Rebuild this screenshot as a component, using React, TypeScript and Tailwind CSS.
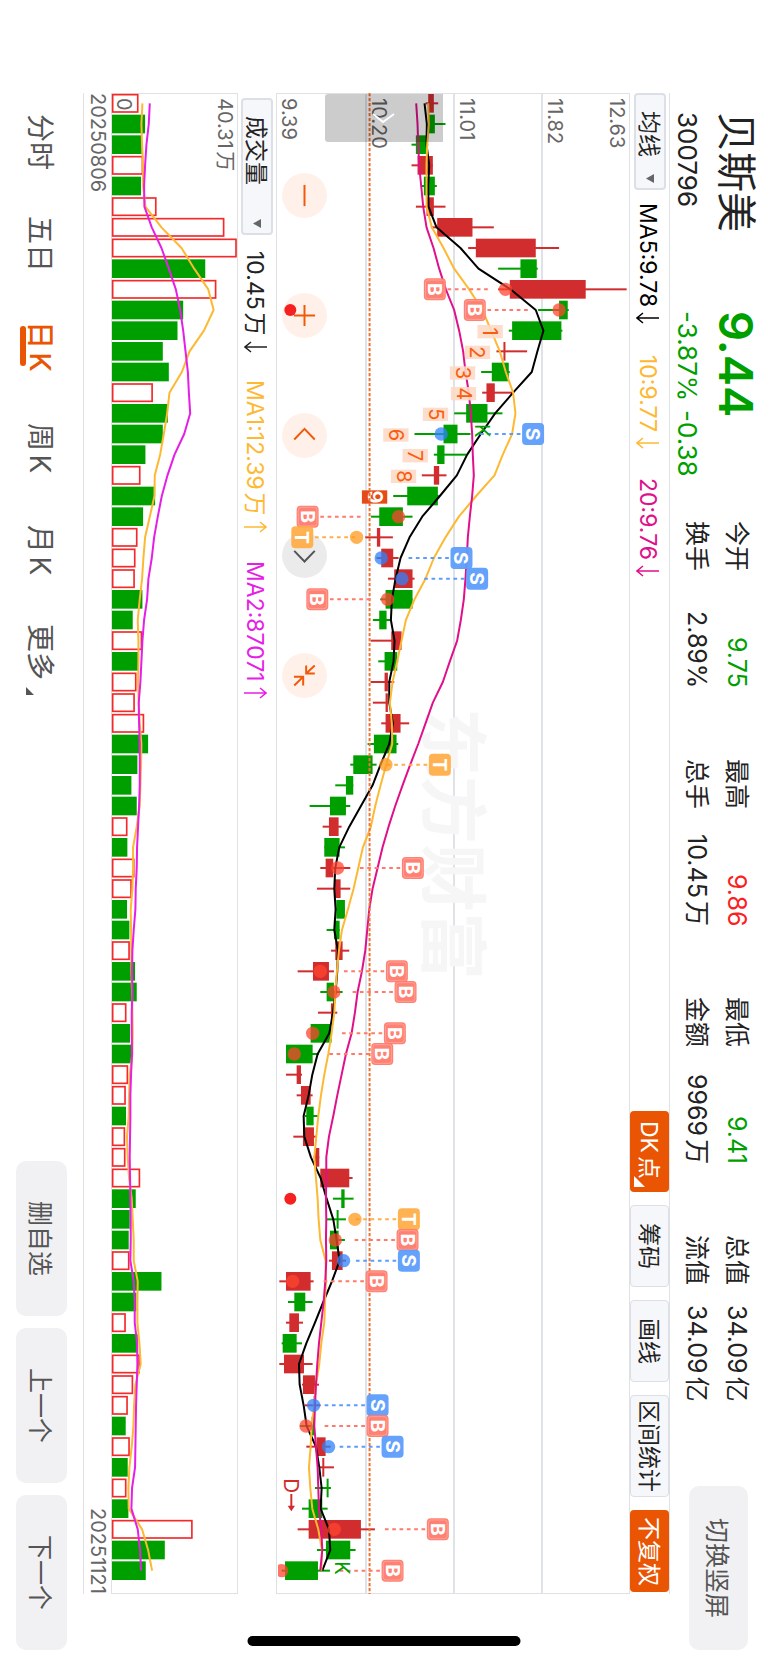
import clsx from "clsx";

type Side = "B" | "S" | "T";

const UP = "#d12d2f";
const DOWN = "#009f00";
const SIDE_COLORS: Record<Side, string> = { B: "#ff7a6b", S: "#5c9dfc", T: "#ffae48" };
const DOT_COLORS: Record<Side, string> = { B: "#ff4630", S: "#2f83fb", T: "#ff9a1c" };

// one step per trading day, three units per pixel
const STEP = 62;
const LENGTH = 4503;
const dayY = (i: number) => 31 + i * STEP;

// [low, body from, body to, high, rising]
const candles: [number, number, number, number, number][] = [
  [497, 505, 522, 535, 1], [506, 506, 525, 557, 0], [455, 468, 500, 505, 0], [455, 473, 519, 519, 1],
  [486, 492, 525, 531, 0], [468, 500, 522, 557, 1], [513, 532, 638, 702, 1], [625, 648, 828, 898, 1],
  [715, 782, 831, 834, 0], [715, 750, 978, 1101, 1], [835, 898, 924, 927, 0], [747, 757, 905, 908, 0],
  [710, 731, 737, 802, 1], [664, 696, 747, 750, 0], [667, 680, 705, 760, 1], [583, 619, 683, 728, 0],
  [464, 551, 593, 632, 0], [522, 532, 554, 619, 0], [486, 522, 538, 560, 1], [400, 442, 534, 537, 0],
  [333, 358, 429, 458, 0], [316, 351, 361, 399, 1], [350, 364, 400, 416, 1], [384, 403, 458, 464, 1],
  [361, 377, 458, 458, 0], [339, 358, 380, 393, 0], [332, 394, 425, 425, 1], [355, 374, 412, 415, 0],
  [332, 374, 384, 403, 1], [339, 377, 384, 384, 1], [364, 377, 422, 448, 1], [323, 342, 410, 415, 0],
  [271, 280, 338, 350, 0], [226, 258, 280, 280, 0], [149, 210, 258, 271, 0], [188, 207, 236, 245, 1],
  [193, 193, 239, 255, 0], [181, 197, 220, 271, 1], [171, 223, 242, 271, 1], [229, 229, 255, 255, 0],
  [200, 222, 239, 239, 0], [213, 226, 248, 268, 1], [113, 159, 207, 222, 1], [181, 200, 222, 248, 0],
  [174, 213, 220, 232, 1], [152, 152, 215, 215, 0], [78, 78, 158, 177, 0], [78, 110, 123, 126, 1],
  [110, 123, 152, 158, 1], [135, 139, 161, 174, 0], [100, 129, 162, 168, 1], [161, 165, 178, 178, 1],
  [181, 181, 268, 278, 1], [219, 244, 254, 281, 0], [200, 230, 236, 258, 0], [210, 210, 236, 255, 0],
  [207, 216, 248, 258, 1], [58, 78, 152, 161, 1], [84, 103, 136, 158, 0], [78, 88, 117, 129, 1],
  [65, 68, 110, 126, 0], [58, 72, 132, 158, 1], [126, 129, 165, 177, 1], [135, 161, 165, 182, 1],
  [120, 155, 163, 163, 0], [139, 170, 197, 212, 1], [178, 187, 193, 222, 1], [165, 200, 206, 213, 0],
  [126, 146, 187, 203, 0], [113, 146, 303, 345, 1], [171, 198, 271, 287, 0], [65, 75, 174, 210, 0],
];

const ma5 = [
  494, 501, 500, 508, 505, 506, 530, 602, 656, 752, 828, 851, 833, 816, 760, 706, 663, 622, 591, 540, 487, 449, 422,
  407, 396, 393, 404, 401, 388, 388, 399, 388, 362, 338, 303, 268, 238, 226, 223, 227, 223, 234, 232, 227, 219, 208,
  173, 157, 146, 131, 133, 153, 182, 200, 220, 230, 239, 216, 190, 165, 139, 117, 119, 131, 140, 168, 178, 185, 182,
  207, 211, 187,
];
const ma10 = [
  505, 507, 502, 500, 500, 500, 516, 551, 583, 628, 668, 694, 720, 738, 760, 767, 757, 729, 704, 649, 597, 557, 522,
  497, 464, 438, 425, 412, 398, 390, 396, 397, 379, 362, 346, 333, 309, 295, 281, 264, 246, 237, 231, 226, 223, 215,
  205, 193, 183, 175, 169, 163, 168, 173, 176, 181, 197, 198, 195, 193, 184, 178, 168, 163, 155, 152, 147, 151, 157,
  175, 186, 184,
];
const ma20 = [
  469, 473, 475, 478, 484, 490, 500, 521, 538, 558, 583, 598, 610, 617, 627, 633, 637, 639, 642, 637, 630, 624, 621,
  617, 612, 603, 592, 570, 549, 519, 497, 475, 451, 428, 406, 386, 368, 353, 338, 328, 322, 316, 306, 293, 285, 275,
  258, 245, 232, 220, 207, 199, 199, 198, 199, 198, 199, 196, 191, 184, 177, 172, 168, 165, 163, 168, 173, 175, 177,
  184, 187, 181,
];

const volumes = [
  416, 436, 426, 430, 424, 470, 673, 710, 616, 649, 550, 533, 489, 507, 459, 504, 489, 437, 422, 466, 430, 413, 407,
  405, 428, 399, 427, 416, 410, 405, 433, 445, 413, 395, 411, 383, 383, 404, 396, 382, 389, 390, 406, 411, 380, 391,
  394, 385, 378, 379, 376, 377, 421, 408, 390, 387, 389, 485, 410, 378, 414, 420, 400, 384, 378, 390, 384, 380, 386,
  578, 495, 438,
];
const volMa1 = [
  428, 425, 427, 430, 430, 437, 485, 545, 583, 625, 641, 612, 569, 546, 509, 502, 492, 481, 465, 464, 450, 436, 431,
  427, 420, 414, 416, 416, 415, 417, 420, 425, 424, 422, 420, 411, 400, 400, 398, 393, 394, 395, 395, 397, 398, 399,
  398, 390, 388, 387, 382, 384, 388, 396, 399, 402, 402, 414, 413, 413, 419, 423, 407, 403, 401, 396, 389, 386, 387,
  427, 445, 457,
];
const volMa2 = [
  450, 447, 440, 436, 433, 434, 456, 485, 507, 528, 541, 550, 557, 564, 567, 571, 553, 524, 503, 486, 474, 463, 456,
  446, 442, 433, 428, 425, 422, 417, 418, 420, 420, 420, 418, 415, 412, 411, 408, 407, 402, 398, 397, 398, 396, 396,
  397, 394, 392, 392, 391, 390, 391, 392, 393, 393, 392, 402, 405, 405, 412, 413, 411, 409, 408, 407, 406, 397, 395,
  414, 421, 424,
];
// days whose volume bar is hollow
const hollow = new Set([
  0, 3, 5, 6, 7, 9, 14, 18, 21, 22, 23, 26, 28, 29, 30, 35, 37, 38, 41, 44, 47, 48, 50, 51, 52, 56, 59, 61, 62, 63, 65,
  67, 69,
]);

// [day, side, badge, dot]
const trades: [number, Side, number, number][] = [
  [9, "B", 525, 737], [10, "B", 645, 898], [16, "S", 820, 544], [20, "B", 143, 416], [21, "T", 127, 290],
  [22, "S", 605, 364], [23, "S", 652, 426], [24, "B", 172, 383], [32, "T", 540, 378], [37, "B", 459, 233],
  [42, "B", 411, 181], [43, "B", 437, 222], [45, "B", 405, 158], [46, "B", 367, 103], [54, "T", 447, 285],
  [55, "B", 443, 226], [56, "S", 447, 251], [57, "B", 350, 98], [63, "S", 353, 161], [64, "B", 353, 138],
  [65, "S", 398, 206], [69, "B", 534, 223], [71, "B", 398, 65],
];

// nine-turn counters, first one on day 11
const turns = [691, 653, 608, 611, 527, 408, 466, 431, 344];

const stats = [
  ["今开", "9.75", "text-[#009f00]", "换手", "2.89%"],
  ["最高", "9.86", "text-[#fb1f1f]", "总手", "10.45万"],
  ["最低", "9.41", "text-[#009f00]", "金额", "9969万"],
  ["总值", "34.09亿", "text-[#222222]", "流值", "34.09亿"],
];

const periods = ["分时", "五日", "日K", "周K", "月K", "更多"];

const path = (values: number[]) => values.map((v, i) => `${i ? "L" : "M"}${v} ${dayY(i)}`).join("");

const Glyph = ({ x, y, size, fill, bold, children }: { x: number; y: number; size: number; fill: string; bold?: boolean; children: string }) => (
  <text
    x={x}
    y={y}
    transform={`rotate(90 ${x} ${y})`}
    textAnchor="middle"
    dominantBaseline="central"
    fontSize={size}
    fontWeight={bold ? 700 : 400}
    fill={fill}
  >
    {children}
  </text>
);

const PriceChart = () => (
  <svg
    className="pointer-events-none absolute -left-px -top-px h-[calc(100%+2px)] w-[calc(100%+2px)] [writing-mode:horizontal-tb]"
    viewBox={`48 0 1063 ${LENGTH}`}
    preserveAspectRatio="none"
  >
    <defs>
      <clipPath id="plot">
        <path d={`M54 0H1111V${LENGTH}H54Z`} />
      </clipPath>
    </defs>
    {candles.map(([low, from, to, high, rising], i) => (
      <g key={i} fill={rising ? UP : DOWN}>
        <rect x={low} y={dayY(i) - 3} width={high - low} height={6} />
        <rect x={from} y={dayY(i) - 28} width={to - from} height={56} />
      </g>
    ))}
    <g fill="none" strokeWidth={6} strokeLinejoin="round">
      <path d={path(ma5)} stroke="#000000" />
      <path d={path(ma10)} stroke="#fdb933" />
      <path d={path(ma20)} stroke="#e0108b" />
    </g>
    {turns.map((x, i) => (
      <g key={i}>
        <rect x={x - 38} y={dayY(i + 11) - 17} width={76} height={40} fill={i === 8 ? "#e64a17" : "#fdd9c6"} fillOpacity={i === 8 ? 1 : 0.9} />
        <Glyph x={x} y={dayY(i + 11) + 3} size={60} fill={i === 8 ? "#ffffff" : "#f95c0c"} bold={i === 8}>
          {String(i + 1)}
        </Glyph>
      </g>
    ))}
    <path d={`M329 0V${LENGTH}`} stroke="#ee7433" strokeWidth={6} strokeDasharray="10 5" />
    <g clipPath="url(#plot)">
      {trades.map(([day, side, badge, dot]) => {
        const y = dayY(day);
        const dir = badge > dot ? -1 : 1;
        return (
          <g key={day}>
            <path
              d={`M${badge + dir * 38} ${y}H${badge + dir * 165}`}
              stroke={SIDE_COLORS[side]}
              strokeWidth={6}
              strokeDasharray="11 11"
            />
            <circle cx={dot} cy={y} r={20} fill={DOT_COLORS[side]} fillOpacity={0.75} />
            <rect x={badge - 33} y={y - 33} width={66} height={66} rx={12} fill={SIDE_COLORS[side]} fillOpacity={0.95} />
            {side === "B" && (
              <rect x={badge - 28} y={y - 28} width={56} height={56} rx={8} fill="none" stroke="#ffffff" strokeOpacity={0.25} strokeWidth={3} />
            )}
            <Glyph x={badge} y={y} size={58} fill="#ffffff" bold>
              {side}
            </Glyph>
          </g>
        );
      })}
    </g>
    <Glyph x={668} y={1013} size={60} fill={DOWN}>K</Glyph>
    <Glyph x={246} y={4425} size={60} fill={DOWN}>K</Glyph>
    <Glyph x={93} y={4178} size={62} fill={UP}>D</Glyph>
    <path d="M94 4203V4240" stroke={UP} strokeWidth={6} />
    <path d="M83 4238H105L94 4255Z" fill={UP} />
    <circle cx={91} cy={dayY(10)} r={18} fill="#f52020" />
    <circle cx={91} cy={dayY(53)} r={18} fill="#f52020" />
  </svg>
);

const VolumeChart = () => (
  <svg
    className="pointer-events-none absolute -left-px -top-px h-[calc(100%+2px)] w-[calc(100%+2px)] [writing-mode:horizontal-tb]"
    viewBox={`334 0 380 ${LENGTH}`}
    preserveAspectRatio="none"
  >
    {volumes.map((v, i) =>
      hollow.has(i) ? (
        <rect key={i} x={339} y={dayY(i) - 26} width={v - 341} height={52} fill="none" stroke="#f42a2a" strokeWidth={5} />
      ) : (
        <rect key={i} x={337} y={dayY(i) - 28} width={v - 337} height={56} fill={DOWN} />
      ),
    )}
    <g fill="none" strokeWidth={6} strokeLinejoin="round">
      <path d={path(volMa1)} stroke="#fdb933" />
      <path d={path(volMa2)} stroke="#e51fe5" />
    </g>
  </svg>
);

const tools = [
  { label: "缩小", d: "M68 36V100" },
  { label: "放大", d: "M68 36V100M36 68H100" },
  { label: "左移", d: "M37 80L68 48L99 80" },
  { label: "右移", d: "M37 54L68 86L99 54", muted: true },
  { label: "还原", d: "M99 38L73 62M73 38V62H99M37 98L64 72M36 72H64V98" },
];

const Indicator = ({ label, size }: { label: string; size: string }) => (
  <div className={clsx("relative w-[32px] shrink-0", size)}>
    <select
      aria-label={label}
      className="h-full w-full appearance-none rounded-[4px] border-2 border-[#dcdfe5] bg-[#f6f7fa] pl-0 pr-[2px] pt-[16px] text-[23px] leading-[26px] text-[#222222]"
    >
      <option>{label}</option>
    </select>
    <svg className="pointer-events-none absolute bottom-[7px] left-[12px] h-[9px] w-[8px]" viewBox="0 0 8 9">
      <path d="M8 0V9L0 4.5Z" fill="#666666" />
    </svg>
  </div>
);

const Reading = ({ text, rising, className }: { text: string; rising?: boolean; className: string }) => (
  <span className={clsx("flex items-center gap-[5px] whitespace-nowrap pr-1", className)}>
    {text}
    <svg className="h-[12px] w-[23px] shrink-0" viewBox="0 0 23 12" fill="none" stroke="currentColor" strokeWidth={1.5}>
      <path d={rising ? "M0 6H22M16 1L22 6L16 11" : "M23 6H1M7 1L1 6L7 11"} />
    </svg>
  </span>
);

const App = () => {
  return (
    <main className="relative flex h-screen min-h-[1500px] w-full flex-col overflow-hidden bg-white font-['Inter','Noto_Sans_CJK_SC',sans-serif] text-[#222222] [text-autospace:normal] [text-orientation:sideways] [writing-mode:vertical-rl]">
      <header className="flex w-[98px] shrink-0 pb-[13px] pr-[7px] pt-[112px]">
        <div className="flex h-[199px] flex-col gap-1">
          <h1 className="whitespace-nowrap text-[40px] leading-[50px]">贝斯美</h1>
          <p className="text-[26px] leading-[40px]">300796</p>
        </div>
        <div className="flex h-[210px] flex-col gap-1 text-[#009f00]">
          <strong className="text-[47px] font-semibold leading-[50px]">9.44</strong>
          <p className="flex gap-[9px] whitespace-nowrap text-[26px] leading-[40px]">
            <span>-3.87%</span>
            <span>-0.38</span>
          </p>
        </div>
        <dl className="flex gap-[71px] pr-1 text-[25px] leading-[40px]">
          {stats.map(([top, topValue, color, bottom, bottomValue]) => (
            <div key={top} className="flex h-[167px] flex-col">
              <div className="flex items-center justify-between">
                <dt>{top}</dt>
                <dd className={color}>{topValue}</dd>
              </div>
              <div className="flex items-center justify-between">
                <dt>{bottom}</dt>
                <dd>{bottomValue}</dd>
              </div>
            </div>
          ))}
        </dl>
        <button className="mr-[13px] mt-auto h-[164px] w-[59px] rounded-[10px] bg-[#f1f1f3] pr-1 text-[25px] text-[#555555]">
          切换竖屏
        </button>
      </header>

      <div className="mb-[69px] mt-[93px] flex w-[40px] shrink-0 items-center border-r border-[#dfe1e4] pb-[2px] text-[23px]">
        <Indicator label="均线" size="h-[97px]" />
        <Reading text="MA5:9.78" className="mt-[13px] h-[152px] text-black" />
        <Reading text="10:9.77" className="h-[123px] text-[#fdb933]" />
        <Reading text="20:9.76" className="text-[#e0108b]" />
        <div className="mt-auto flex gap-[13px]">
          <button className="relative h-[81px] w-[39px] whitespace-nowrap rounded-[4px] bg-[#ea5504] pb-1 pr-[2px] text-white">
            DK点
            <svg className="absolute bottom-[5px] left-[4px] h-[11px] w-[11px]" viewBox="0 0 11 11">
              <path d="M0 0V11H11Z" fill="#ffffff" />
            </svg>
          </button>
          <button className="h-[82px] w-[39px] rounded-[4px] border border-[#dcdfe5] bg-[#f6f7fa] pr-[2px]">筹码</button>
          <button className="h-[82px] w-[39px] rounded-[4px] border border-[#dcdfe5] bg-[#f6f7fa] pr-[2px]">画线</button>
          <button className="h-[102px] w-[39px] rounded-[4px] border border-[#dcdfe5] bg-[#f6f7fa] pr-[2px]">区间统计</button>
          <button className="h-[82px] w-[39px] rounded-[4px] bg-[#ea5504] pr-[2px] text-white">不复权</button>
        </div>
      </div>

      <section className="relative mb-[69px] mt-[93px] flex flex-1 flex-col border border-[#dfe1e4] text-[20px] leading-[24px] text-[#666666]">
        <div className="flex flex-1 flex-col justify-between border-l-2 border-[#dfe3e8] pt-1">
          <span>12.63</span>
          <span>11.82</span>
        </div>
        <div className="flex flex-1 flex-col justify-end border-l-2 border-[#dfe3e8] pt-1">11.01</div>
        <div className="flex flex-1 flex-col justify-end border-l-2 border-[#dfe3e8] pt-1">10.20</div>
        <div className="flex w-[88px] shrink-0 flex-col justify-end pt-1">9.39</div>
        <p className="absolute left-[140px] top-[614px] whitespace-nowrap text-[68px] font-bold leading-[72px] text-[#f6f6f6]">
          东方财富
        </p>
        <div className="absolute left-[5px] top-[79px] flex gap-[75px]">
          {tools.map(({ label, d, muted }) => (
            <button
              key={label}
              aria-label={label}
              className={clsx("h-[45px] w-[45px] rounded-full", muted ? "bg-black/8 text-[#555555]" : "bg-[#fff1e9] text-[#f0590a]")}
            >
              <svg className="h-full w-full" viewBox="0 0 136 136" fill="none" stroke="currentColor" strokeWidth={6}>
                <path d={d} />
              </svg>
            </button>
          ))}
        </div>
        <PriceChart />
        <div className="absolute left-[48px] top-0 h-[48px] w-[118px] rounded-l-[3px] bg-black/20">
          <svg className="h-full w-full" viewBox="0 0 118 48" fill="none" stroke="#ffffff" strokeWidth={2}>
            <path d="M48 20L58 28L69 20" />
          </svg>
        </div>
      </section>

      <div className="mb-[69px] mt-[98px] flex w-[38px] shrink-0 items-center whitespace-nowrap text-[23px]">
        <Indicator label="成交量" size="h-[137px]" />
        <Reading text="10.45万" className="mt-[16px] h-[129px]" />
        <Reading text="MA1:12.39万" rising className="h-[181px] text-[#fdb933]" />
        <Reading text="MA2:87071" rising className="text-[#e51fe5]" />
      </div>

      <section className="relative mb-[69px] mt-[93px] flex w-[127px] shrink-0 flex-col justify-between border border-[#dfe1e4] pt-1 text-[20px] leading-[24px] text-[#666666]">
        <span>40.31万</span>
        <span>0</span>
        <VolumeChart />
      </section>
      <div className="mb-[69px] mt-[93px] flex w-[28px] shrink-0 justify-between border-l border-[#dfe1e4] text-[20px] leading-[26px] text-[#666666]">
        <time>20250806</time>
        <time>20251121</time>
      </div>

      <footer className="flex w-[83px] shrink-0 items-center pb-[13px] pt-[91px]">
        <nav className="flex">
          {periods.map((name) => (
            <button
              key={name}
              className={clsx(
                "relative h-[102px] w-[51px] whitespace-nowrap pr-1 text-[28px]",
                name === "日K" ? "font-medium text-[#ea5504]" : "text-[#555555]",
              )}
            >
              {name}
              {name === "日K" && <span className="absolute left-[4px] top-[31px] h-[40px] w-[6px] rounded-full bg-[#ea5504]" />}
              {name === "更多" && (
                <svg className="absolute bottom-[8px] left-[10px] h-[8px] w-[8px]" viewBox="0 0 8 8">
                  <path d="M0 0V8H8Z" fill="#555555" />
                </svg>
              )}
            </button>
          ))}
        </nav>
        <div className="mt-auto flex gap-3 text-[25px] text-[#555555]">
          <button className="h-[155px] w-[51px] rounded-[10px] bg-[#f1f1f3] pr-1">删自选</button>
          <button className="h-[155px] w-[51px] rounded-[10px] bg-[#f1f1f3] pr-1">上一个</button>
          <button className="h-[155px] w-[51px] rounded-[10px] bg-[#f1f1f3] pr-1">下一个</button>
        </div>
      </footer>

      <div className="absolute bottom-[17px] left-1/2 h-[10px] w-[273px] -translate-x-1/2 rounded-full bg-black" />
    </main>
  );
};

export default App;
